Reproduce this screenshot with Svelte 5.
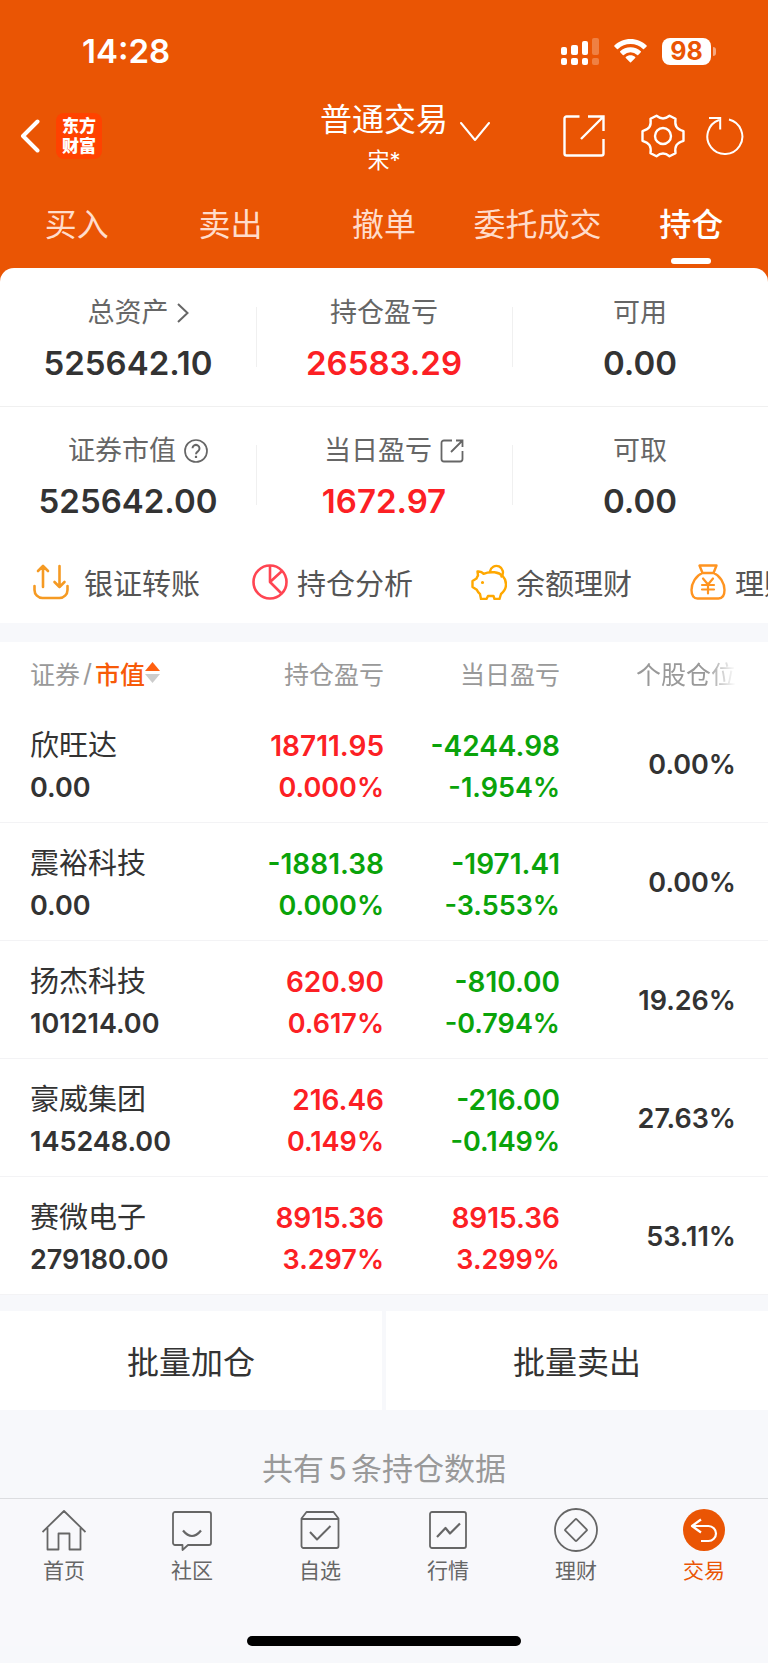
<script lang="ts">
  type Tone = 'up' | 'down' | ''

  const tabs = ['买入', '卖出', '撤单', '委托成交', '持仓']
  let activeTab = '持仓'

  const summary: { label: string, value: string, tone: Tone, icon?: string }[][] = [
    [
      { label: '总资产', value: '525642.10', tone: '', icon: 'more' },
      { label: '持仓盈亏', value: '26583.29', tone: 'up' },
      { label: '可用', value: '0.00', tone: '' },
    ],
    [
      { label: '证券市值', value: '525642.00', tone: '', icon: 'help' },
      { label: '当日盈亏', value: '1672.97', tone: 'up', icon: 'share' },
      { label: '可取', value: '0.00', tone: '' },
    ],
  ]

  const shortcuts = [
    { label: '银证转账', icon: 'transfer' },
    { label: '持仓分析', icon: 'pie' },
    { label: '余额理财', icon: 'piggy' },
    { label: '理财', icon: 'bag' },
  ]

  const holdings = [
    { name: '欣旺达', value: '0.00', profit: '18711.95', profitRate: '0.000%', day: '-4244.98', dayRate: '-1.954%', share: '0.00%' },
    { name: '震裕科技', value: '0.00', profit: '-1881.38', profitRate: '0.000%', day: '-1971.41', dayRate: '-3.553%', share: '0.00%' },
    { name: '扬杰科技', value: '101214.00', profit: '620.90', profitRate: '0.617%', day: '-810.00', dayRate: '-0.794%', share: '19.26%' },
    { name: '豪威集团', value: '145248.00', profit: '216.46', profitRate: '0.149%', day: '-216.00', dayRate: '-0.149%', share: '27.63%' },
    { name: '赛微电子', value: '279180.00', profit: '8915.36', profitRate: '3.297%', day: '8915.36', dayRate: '3.299%', share: '53.11%' },
  ]

  const menu = [
    { label: '首页', icon: 'home' },
    { label: '社区', icon: 'chat' },
    { label: '自选', icon: 'box' },
    { label: '行情', icon: 'chart' },
    { label: '理财', icon: 'coin' },
    { label: '交易', icon: 'trade' },
  ]

  const tone = (amount: string): Tone => amount.startsWith('-') ? 'down' : 'up'
</script>

<div class="page">
  <header>
    <div class="status">
      <span class="time">14:28</span>
      <div class="status-icons">
        <svg width="38" height="27" viewBox="0 0 38 27" fill="#fff">
          <rect x="0" y="9" width="6" height="8" rx="2" />
          <rect x="0" y="20" width="6" height="7" rx="2" />
          <rect x="10" y="7" width="7" height="10" rx="2" />
          <rect x="10" y="20" width="7" height="7" rx="2" />
          <rect x="21" y="3" width="6" height="14" rx="2" />
          <rect x="21" y="20" width="6" height="7" rx="2" />
          <g opacity="0.25">
            <rect x="31" y="0" width="7" height="17" rx="2" />
            <rect x="31" y="20" width="7" height="7" rx="2" />
          </g>
        </svg>
        <svg width="33" height="24" viewBox="0 0 33 24" fill="#fff">
          <path d="M16.5 0C10.2 0 4.500 2.500.4 6.500a.7.7 0 0 0 0 1l2.600 2.600a.7.7 0 0 0 1 0A18 18 0 0 1 16.500 5.100 18 18 0 0 1 29 10.100a.7.7 0 0 0 1 0l2.600-2.600a.7.7 0 0 0 0-1C28.500 2.500 22.800 0 16.500 0Z" />
          <path d="M16.5 8.300c-4 0-7.600 1.500-10.300 4a.7.7 0 0 0 0 1l2.600 2.600a.7.7 0 0 0 1 0 9.900 9.900 0 0 1 13.400 0 .7.7 0 0 0 1 0l2.600-2.600a.7.7 0 0 0 0-1 15.200 15.200 0 0 0-10.300-4Z" />
          <path d="M16.5 16.200c-1.800 0-3.500.6-4.700 1.700a.7.7 0 0 0 0 1l4.200 4.400a.7.7 0 0 0 1 0l4.200-4.400a.7.7 0 0 0 0-1c-1.200-1.100-2.900-1.700-4.700-1.700Z" />
        </svg>
        <div class="battery"><span>98</span></div>
      </div>
    </div>

    <div class="nav">
      <div class="nav-left">
        <button aria-label="返回">
          <svg width="20" height="34" viewBox="0 0 20 34" fill="none" stroke="#fff" stroke-width="4" stroke-linecap="round" stroke-linejoin="round"><path d="M17.500 2.500 3 17l14.500 14.500" /></svg>
        </button>
        <span class="logo">东方<br>财富</span>
      </div>
      <div class="title">
        <h1>普通交易</h1>
        <span>宋*</span>
      </div>
      <div class="nav-right">
        <button class="account" aria-label="切换账户">
          <svg width="30" height="20" viewBox="0 0 30 20" fill="none" stroke="#fff" stroke-width="2" stroke-linecap="round" stroke-linejoin="round"><path d="M1 1l14 17L29 1" /></svg>
        </button>
        <button aria-label="分享">
          <svg width="42" height="42" viewBox="0 0 42 42" fill="none" stroke="#fff" stroke-width="2.4"><path d="M16.500 1.500H3.500a2 2 0 0 0-2 2V38.500a2 2 0 0 0 2 2H38.500a2 2 0 0 0 2-2V24M25 1.500H40.500V16M40 2 18 24" /></svg>
        </button>
        <button aria-label="设置">
          <svg width="44" height="44" viewBox="0 0 44 44" fill="none" stroke="#fff" stroke-width="2.4" stroke-linejoin="round">
            <path d="M15.500 1.800Q22 7 28.500 1.800L34.500 4.800C33.500 12 35.500 15 42.500 17.200V26.800C35.500 29 33.500 32 34.500 39.200L28.500 42.200Q22 37 15.500 42.200L9.500 39.200C10.500 32 8.500 29 1.500 26.800V17.200C8.500 15 10.500 12 9.500 4.800Z" />
            <circle cx="22" cy="22" r="8" />
          </svg>
        </button>
        <button class="refresh" aria-label="刷新">
          <svg width="38" height="40" viewBox="0 0 38 40" fill="none" stroke="#fff" stroke-width="2"><path d="M23 3.500A17.500 17.500 0 1 1 13 4M3 2H14.200V13.500" /></svg>
        </button>
      </div>
    </div>

    <nav class="tabs">
      {#each tabs as tab}
        <button class="tab" class:active={tab === activeTab} on:click={() => activeTab = tab}>{tab}</button>
      {/each}
    </nav>
  </header>

  <main>
    <div class="panel-wrap">
      <section class="panel">
        {#each summary as row}
          <div class="summary-row">
            {#each row as item}
              <div class="summary-item">
                <div class="label" class:with-icon={item.icon}>
                  {item.label}
                  {#if item.icon === 'more'}
                    <svg width="12" height="20" viewBox="0 0 12 20" fill="none" stroke="#666" stroke-width="2"><path d="M1 1l9.500 9L1 19" /></svg>
                  {:else if item.icon === 'help'}
                    <svg width="24" height="24" viewBox="0 0 24 24" fill="none" stroke="#666" stroke-width="1.7">
                      <circle cx="12" cy="12" r="11" />
                      <path d="M8.500 9.300a3.500 3.500 0 1 1 5.600 2.900C12.700 13.200 12 13.600 12 15.200" stroke-width="2" />
                      <path d="M12 16.800v2.200" stroke-width="2.2" />
                    </svg>
                  {:else if item.icon === 'share'}
                    <svg width="24" height="24" viewBox="0 0 24 24" fill="none" stroke="#666" stroke-width="1.8"><path d="M12 1.500H4a2.500 2.500 0 0 0-2.500 2.500V20A2.500 2.500 0 0 0 4 22.500H20a2.500 2.500 0 0 0 2.500-2.500V12M16 1.500H22.500V8M22 2 11 13" /></svg>
                  {/if}
                </div>
                <div class="amount {item.tone}">{item.value}</div>
              </div>
            {/each}
          </div>
        {/each}

        <div class="shortcuts">
          {#each shortcuts as { label, icon }}
            <button class="shortcut {icon}">
              {#if icon === 'transfer'}
                <svg width="36" height="36" viewBox="0 0 36 36" fill="none" stroke="#f59a23" stroke-width="2.6" stroke-linecap="round" stroke-linejoin="round"><path d="M10 23V2M5 7l5-5 5 5M26.500 2v21M21.500 18l5 5 5-5M1.500 22v4a8 8 0 0 0 8 8h17a8 8 0 0 0 8-8v-4" /></svg>
              {:else if icon === 'pie'}
                <svg width="36" height="36" viewBox="0 0 36 36" fill="none" stroke="#ff4552" stroke-width="2.6" stroke-linejoin="round"><circle cx="18" cy="18" r="16.500" /><path d="M18 1.500V18L29.500 29.500M18 18 30 7" /></svg>
              {:else if icon === 'piggy'}
                <svg width="36" height="36" viewBox="0 0 36 36" fill="none" stroke="#ffa800" stroke-width="2.4" stroke-linejoin="round" stroke-linecap="round">
                  <path d="M6.500 7.500q4-.5 6 2.300c3-1.300 7-1.800 11-1.500C30.500 9 35 14 35 20.500c0 4-2 7-5 9.500l-1.500 5h-5l-1-3H17l-1.500 3H10l-1-5c-1.500-1-2.500-2.500-3.200-4.200L1.500 23v-6l4-2.500c.5-1.500 1.200-2.200 1.500-3Z" />
                  <path d="M19 7.500a6.500 6.500 0 1 1 11.500 5" />
                  <circle cx="11.500" cy="18.500" r="0.8" fill="#ffa800" stroke-width="1.6" />
                </svg>
              {:else}
                <svg width="36" height="36" viewBox="0 0 36 36" fill="none" stroke="#ff9420" stroke-width="2.4" stroke-linejoin="round" stroke-linecap="round">
                  <path d="M9.500 1.500h17l-3 7.500C30 11.500 34.500 19 34.500 26c0 6-2.500 8.500-6 8.500h-21c-3.500 0-6-2.500-6-8.500 0-7 4.500-14.500 11-17ZM12.500 9h11" />
                  <path d="M13 14.500l5 6 5-6M12 21h12M12 25.500h12M18 21v8.500" stroke-width="2.2" />
                </svg>
              {/if}
              {label}
            </button>
          {/each}
        </div>
      </section>
    </div>

    <table>
      <thead>
        <tr>
          <th class="first">
            <button class="sort">
              证券<i>/</i><b>市值</b>
              <svg width="15" height="21" viewBox="0 0 15 21"><path d="M7.500 0 15 9H0Z" fill="#ff6010" /><path d="M0 12h15l-7.500 9Z" fill="#ccc" /></svg>
            </button>
          </th>
          <th class="mid">持仓盈亏</th>
          <th class="mid">当日盈亏</th>
          <th class="last"><span class="fade">个股仓位</span></th>
        </tr>
      </thead>
      <tbody>
        {#each holdings as item}
          <tr>
            <td class="first"><span class="name">{item.name}</span><span>{item.value}</span></td>
            <!-- the rate takes the colour of its amount, so a flat 0.000% can be either -->
            <td class={tone(item.profit)}><span class="money">{item.profit}</span><span>{item.profitRate}</span></td>
            <td class={tone(item.day)}><span class="money">{item.day}</span><span>{item.dayRate}</span></td>
            <td class="last">{item.share}</td>
          </tr>
        {/each}
      </tbody>
    </table>

    <div class="batch">
      <button>批量加仓</button>
      <button>批量卖出</button>
    </div>

    <p class="count">共有<span>{holdings.length}</span>条持仓数据</p>
  </main>

  <footer>
    <nav class="menu">
      {#each menu as { label, icon }}
        <a href="#{icon}" class:current={icon === 'trade'}>
          <svg width="44" height="44" viewBox="0 0 44 44" fill="none" stroke="#666" stroke-width="1.8" stroke-linejoin="round">
            {#if icon === 'home'}
              <path d="M0.500 24 22 3l21.500 21M5.500 20v21.500h11V25.500h11v16h11V20" />
            {:else if icon === 'chat'}
              <path d="M5 4h34a2 2 0 0 1 2 2v29a2 2 0 0 1-2 2H18l-5.500 5V37H5a2 2 0 0 1-2-2V6a2 2 0 0 1 2-2Z" />
              <path d="M13 22.500q9 11 18 0" stroke-width="2.2" />
            {:else if icon === 'box'}
              <path d="M3.500 10.500 8.500 4h27l5 6.500V38a2 2 0 0 1-2 2h-33a2 2 0 0 1-2-2ZM3.500 11h37" />
              <path d="M12 24l7 7.500L32.500 18" stroke-width="2" />
            {:else if icon === 'chart'}
              <rect x="4" y="4" width="36" height="36" rx="2" />
              <path d="M11 29l8.500-9 4.500 5.500L34 15.500" stroke-width="2.2" />
            {:else if icon === 'coin'}
              <circle cx="22" cy="22" r="21" />
              <rect x="14" y="14" width="16" height="16" rx="1" transform="rotate(45 22 22)" />
            {:else}
              <circle cx="22" cy="22" r="21" fill="#ea5504" stroke="none" />
              <path d="M19 11.500 10 18l9 6.500M10 18h16.500a7.500 7.500 0 0 1 0 15H19" stroke="#fff" stroke-width="2.2" />
            {/if}
          </svg>
          {label}
        </a>
      {/each}
    </nav>
    <div class="home-bar"></div>
  </footer>
</div>

<style>
  :global(body) {
    background: #f7f8fb;
  }

  .page {
    font-family: Inter, "Noto Sans CJK SC", sans-serif;
    color: #333;
    background: #f7f8fb;
    overflow: hidden;
  }

  svg {
    display: block;
    flex: none;
  }

  button {
    border: 0;
    padding: 0;
    background: none;
    font: inherit;
    color: inherit;
    cursor: pointer;
  }

  header {
    background: #ea5504;
    color: #fff;
  }

  .status {
    display: flex;
    justify-content: space-between;
    align-items: center;
    height: 96px;
    padding: 6px 52px 0 82px;
    box-sizing: border-box;
  }

  .time {
    font-size: 33px;
    font-weight: 600;
  }

  .status-icons {
    display: flex;
    align-items: center;
    gap: 15px;
  }

  .battery {
    display: flex;
    align-items: center;
    gap: 2px;
  }

  .battery span {
    width: 49px;
    border-radius: 8px;
    background: #fff;
    color: #ea5504;
    font-size: 25px;
    font-weight: 700;
    line-height: 27px;
    text-align: center;
  }

  .battery::after {
    content: '';
    width: 3px;
    height: 9px;
    border-radius: 0 3px 3px 0;
    background: #f5a880;
  }

  .nav {
    display: grid;
    grid-template-columns: 1fr auto 1fr;
    align-items: center;
    padding: 0 20px;
  }

  .nav-left {
    display: flex;
    align-items: center;
    gap: 16px;
  }

  .logo {
    padding: 3px 0;
    width: 46px;
    border-radius: 8px;
    background: #ff4200;
    font-size: 17px;
    font-weight: 900;
    line-height: 20px;
    text-align: center;
  }

  .title {
    text-align: center;
  }

  h1 {
    margin: 0;
    font-size: 32px;
    font-weight: 400;
    line-height: 48px;
  }

  .title span {
    display: block;
    font-size: 22px;
    line-height: 32px;
  }

  .nav-right {
    display: flex;
    align-items: center;
    justify-content: flex-end;
    gap: 36px;
    padding-right: 4px;
  }

  .account {
    margin: 0 auto 8px 12px;
  }

  .refresh {
    margin-left: -15px;
  }

  .tabs {
    display: grid;
    grid-template-columns: repeat(5, 1fr);
  }

  .tab {
    display: flex;
    flex-direction: column;
    align-items: center;
    gap: 9px;
    padding: 25px 0 4px;
    font-size: 32px;
    line-height: 48px;
    color: #ffdccb;
    white-space: nowrap;
  }

  .tab::after {
    content: '';
    width: 40px;
    height: 6px;
    border-radius: 3px;
  }

  .tab.active {
    color: #fff;
    font-weight: 500;
  }

  .tab.active::after {
    background: #fff;
  }

  .panel-wrap {
    background: #ea5504;
  }

  .panel {
    border-radius: 14px 14px 0 0;
    background: #fff;
  }

  .summary-row {
    display: grid;
    grid-template-columns: repeat(3, 1fr);
    padding: 25px 0 21px;
  }

  .summary-row + .summary-row {
    border-top: 1px solid #f0f0f0;
    padding: 24px 0 22px;
  }

  .summary-item {
    position: relative;
    text-align: center;
  }

  .summary-item + .summary-item::before {
    content: '';
    position: absolute;
    left: 0;
    top: 14px;
    height: 60px;
    border-left: 1px solid #f0f0f0;
  }

  .label {
    display: flex;
    justify-content: center;
    align-items: center;
    gap: 8px;
    font-size: 27px;
    line-height: 40px;
    color: #666;
  }

  .with-icon {
    padding-left: 20px;
  }

  .amount {
    padding-top: 8px;
    font-size: 33px;
    font-weight: 600;
    line-height: 44px;
  }

  .up {
    color: #fc2024;
  }

  .down {
    color: #0aa30a;
  }

  .shortcuts {
    display: flex;
    padding: 0 33px 4px;
    overflow: hidden;
  }

  .shortcut {
    display: flex;
    flex: none;
    align-items: center;
    gap: 9px;
    width: 219px;
    height: 74px;
    font-size: 29px;
    color: #555;
    white-space: nowrap;
  }

  .shortcut.transfer {
    gap: 15px;
  }

  table {
    width: 100%;
    margin: 19px 0 16px;
    border-collapse: collapse;
    table-layout: fixed;
    background: #fff;
  }

  th {
    padding: 0 0 2px;
    height: 61px;
    font-size: 25px;
    font-weight: 400;
    text-align: right;
    color: #999;
  }

  .mid {
    width: 176px;
  }

  th.first {
    padding-left: 30px;
    text-align: left;
  }

  th.last {
    width: 176px;
    padding-right: 32px;
  }

  .sort {
    display: flex;
    align-items: center;
  }

  .sort i {
    padding: 0 3px;
    font-style: normal;
  }

  .sort b {
    font-weight: 500;
    color: #f75a08;
  }

  .fade {
    mask-image: linear-gradient(to right, #000 70%, transparent);
  }

  td {
    padding: 20px 0 13px;
    border-bottom: 1px solid #f3f3f5;
    font-size: 27px;
    font-weight: 600;
    line-height: 42px;
    text-align: right;
  }

  td.first {
    padding-left: 30px;
    text-align: left;
  }

  td.last {
    padding: 17px 32px 15px 0;
  }

  td span {
    display: block;
  }

  .name {
    font-size: 29px;
    font-weight: 400;
    white-space: nowrap;
  }

  .money {
    font-size: 28px;
  }

  .batch {
    display: grid;
    grid-template-columns: 1fr 1fr;
    gap: 4px;
  }

  .batch button {
    height: 99px;
    padding-bottom: 2px;
    background: #fff;
    font-size: 32px;
  }

  .count {
    margin: 0;
    padding: 37px 0 7px;
    font-size: 31px;
    line-height: 44px;
    text-align: center;
    color: #999;
  }

  .count span {
    padding: 0 4px;
  }

  footer {
    border-top: 1px solid #dcdde0;
    background: #f8f8fb;
  }

  .menu {
    display: grid;
    grid-template-columns: repeat(6, 1fr);
    padding-top: 9px;
  }

  .menu a {
    display: flex;
    flex-direction: column;
    align-items: center;
    gap: 4px;
    font-size: 21px;
    line-height: 30px;
    color: #666;
    text-decoration: none;
  }

  .menu a.current {
    color: #ea5504;
  }

  .home-bar {
    width: 274px;
    height: 10px;
    margin: 50px auto 17px;
    border-radius: 5px;
    background: #000;
  }
</style>
